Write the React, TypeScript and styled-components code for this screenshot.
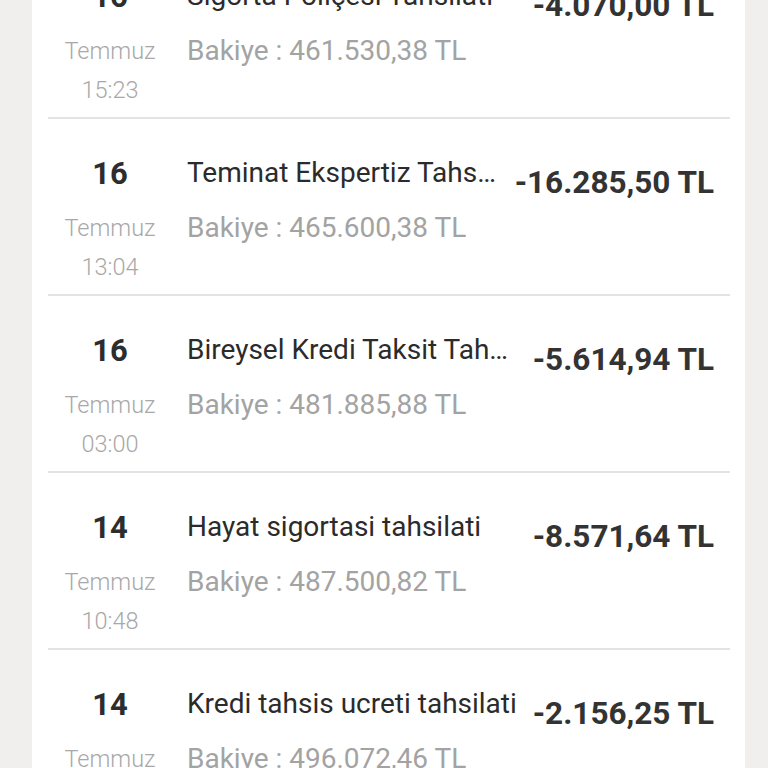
import React from "react";
import styled, { createGlobalStyle } from "styled-components";

const Global = createGlobalStyle`
  html, body { margin: 0; padding: 0; background: #f0efed; overflow: hidden; }
  body { font-family: Roboto, "Noto Sans", "Liberation Sans", sans-serif; }
`;

const Page = styled.div`
  width: 768px;
  height: 768px;
  overflow: hidden;
  background: #f0efed;
  display: flex;
  justify-content: flex-start;
`;

const Card = styled.div`
  margin-left: 32px;
  width: 713px;
  background: #fff;
  padding: 0 15px 0 16px;
  box-sizing: border-box;
  margin-top: -58px;
  align-self: flex-start;
`;

const Row = styled.div`
  display: grid;
  grid-template-columns: 124px 1fr auto;
  column-gap: 15px;
  height: 175px;
  border-bottom: 2px solid #e3e3e3;
  padding-right: 16px;
`;

const DateCol = styled.div`
  display: flex;
  flex-direction: column;
  align-items: center;
  padding-top: 38px;
`;

const Day = styled.div`
  font-size: 31px;
  font-weight: 700;
  color: #2d2d2d;
  line-height: 34px;
`;

const Month = styled.div`
  font-size: 23.5px;
  font-weight: 300;
  color: #a8a8a8;
  line-height: 26px;
  margin-top: 24px;
`;

const Time = styled.div`
  font-size: 23.5px;
  font-weight: 300;
  color: #a8a8a8;
  line-height: 26px;
  margin-top: 13px;
`;

const Mid = styled.div`
  display: flex;
  flex-direction: column;
  padding-top: 38px;
  min-width: 0;
`;

const Title = styled.div`
  font-size: 28px;
  color: #2b2b2b;
  line-height: 32px;
  white-space: nowrap;
`;

const Balance = styled.div`
  font-size: 28px;
  color: #a3a3a3;
  line-height: 32px;
  margin-top: 23px;
  white-space: nowrap;
`;

const Amount = styled.div`
  font-size: 31.5px;
  font-weight: 700;
  color: #333;
  line-height: 34px;
  padding-top: 47px;
  white-space: nowrap;
  text-align: right;
`;

type Tx = {
  day: string;
  time: string;
  title: string;
  balance: string;
  amount: string;
};

const data: Tx[] = [
  { day: "16", time: "15:23", title: "Sigorta Poliçesi Tahsilati", balance: "461.530,38 TL", amount: "-4.070,00 TL" },
  { day: "16", time: "13:04", title: "Teminat Ekspertiz Tahs…", balance: "465.600,38 TL", amount: "-16.285,50 TL" },
  { day: "16", time: "03:00", title: "Bireysel Kredi Taksit Tah…", balance: "481.885,88 TL", amount: "-5.614,94 TL" },
  { day: "14", time: "10:48", title: "Hayat sigortasi tahsilati", balance: "487.500,82 TL", amount: "-8.571,64 TL" },
  { day: "14", time: "", title: "Kredi tahsis ucreti tahsilati", balance: "496.072,46 TL", amount: "-2.156,25 TL" },
];

export default function App() {
  return (
    <Page>
      <Global />
      <Card>
        {data.map((t, i) => (
          <Row key={i}>
            <DateCol>
              <Day>{t.day}</Day>
              <Month>Temmuz</Month>
              <Time>{t.time}</Time>
            </DateCol>
            <Mid>
              <Title>{t.title}</Title>
              <Balance>Bakiye : {t.balance}</Balance>
            </Mid>
            <Amount>{t.amount}</Amount>
          </Row>
        ))}
      </Card>
    </Page>
  );
}
